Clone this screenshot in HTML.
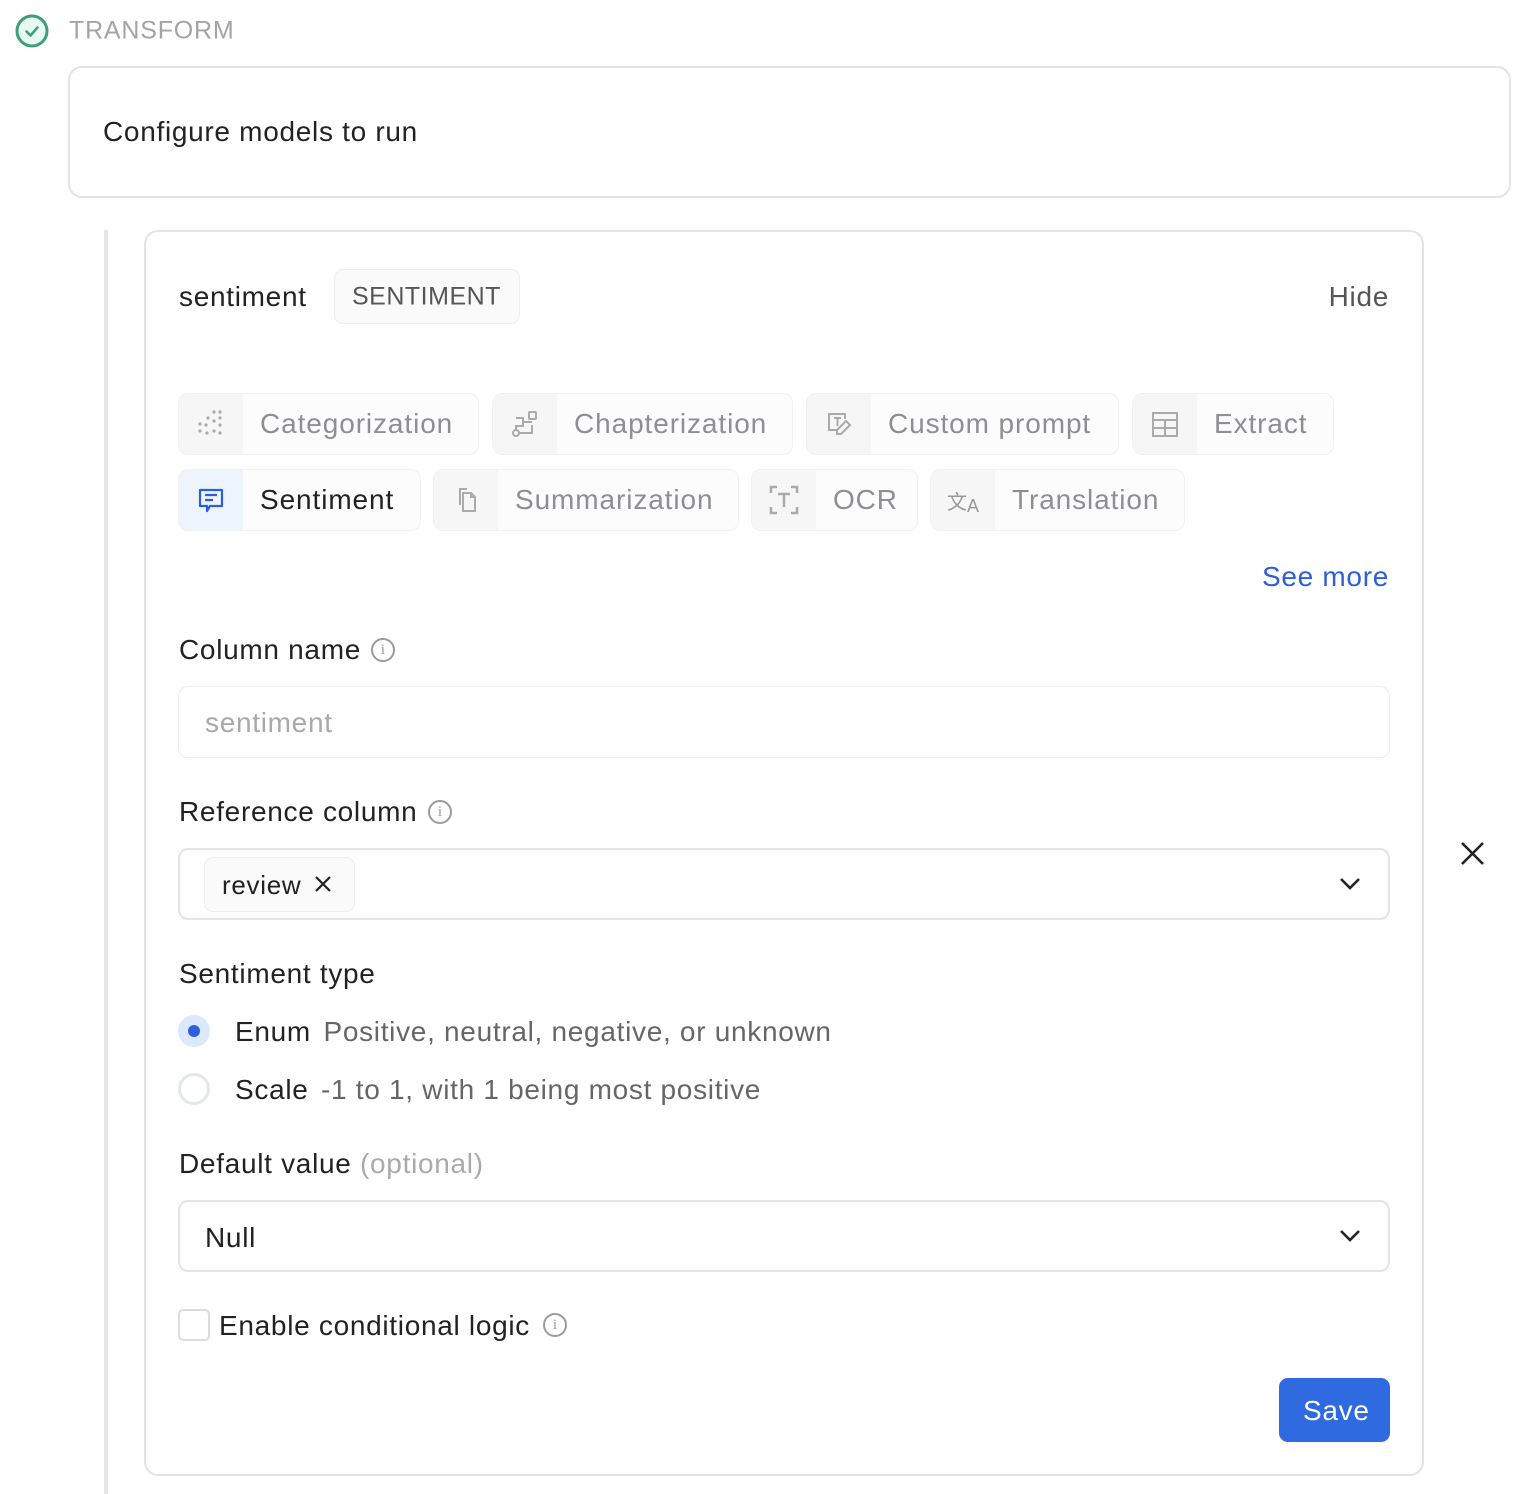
<!DOCTYPE html>
<html><head><meta charset="utf-8"><style>
*{box-sizing:border-box;margin:0;padding:0}
body{width:1538px;height:1494px;background:#fff;font-family:"Liberation Sans",Helvetica,Arial,sans-serif;color:#222;position:relative;overflow:hidden}
.a{position:absolute}
.t{position:absolute;white-space:nowrap;line-height:1;transform:translateY(-50%);letter-spacing:.7px}
.chip{position:absolute;height:62px;border:1.5px solid #f1f1f3;border-radius:10px;background:#fcfcfc;overflow:hidden}
.chip .ic{position:absolute;left:0;top:0;width:64px;height:100%;background:#f6f6f7;display:flex;align-items:center;justify-content:center}
.chip .lb{position:absolute;left:81px;top:50%;transform:translateY(-50%);font-size:28px;color:#8e8e93;white-space:nowrap;letter-spacing:.9px}
.box{position:absolute;border:2px solid #e4e4e7;border-radius:10px;background:#fff}
.info{display:inline-block;width:24px;height:24px;border:2px solid #9a9aa0;border-radius:50%;position:absolute}
.info:after{content:"i";position:absolute;left:0;right:0;top:2px;text-align:center;font-size:15px;color:#9a9aa0;font-family:"Liberation Serif",serif}
</style></head><body>
<svg class="a" style="left:15px;top:14px" width="34" height="34" viewBox="0 0 34 34"><circle cx="17" cy="17" r="15" fill="#e9f8f1" stroke="#3f9d7c" stroke-width="3"/><path d="M11.5 17.5l4 4 7-8" fill="none" stroke="#3f9d7c" stroke-width="2.5" stroke-linecap="round" stroke-linejoin="round"/></svg>
<div class="t" style="left:69px;top:31px;font-size:25px;color:#a3a3a8;letter-spacing:.8px">TRANSFORM</div>
<div class="box" style="left:68px;top:66px;width:1443px;height:132px;border-radius:14px"></div>
<div class="t" style="left:103px;top:132px;font-size:28px">Configure models to run</div>
<div class="a" style="left:104px;top:230px;width:4px;height:1264px;background:#e6e6e9"></div>
<div class="box" style="left:144px;top:230px;width:1280px;height:1246px;border-radius:14px"></div>
<div class="t" style="left:179px;top:297px;font-size:28px">sentiment</div>
<div class="a" style="left:334px;top:269px;width:186px;height:55px;border:1.5px solid #ededf0;border-radius:9px;background:#fafafa"></div>
<div class="t" style="left:352px;top:297px;font-size:25px;color:#555;letter-spacing:.5px">SENTIMENT</div>
<div class="t" style="right:149px;top:297px;font-size:28px;color:#555">Hide</div>

<div class="chip" style="left:178px;top:393px;width:301px"><div class="ic"><svg width="30" height="30" viewBox="0 0 30 30" fill="#aaa"><circle cx="18" cy="3" r="1.6"/><circle cx="24" cy="3" r="1.6"/><circle cx="12" cy="9" r="1.6"/><circle cx="24" cy="9" r="1.6"/><circle cx="18" cy="12" r="1.6"/><circle cx="4" cy="15" r="1.6"/><circle cx="10" cy="16" r="1.6"/><circle cx="24" cy="16" r="1.6"/><circle cx="4" cy="22" r="1.6"/><circle cx="18" cy="22" r="1.6"/><circle cx="11" cy="24" r="1.6"/><circle cx="24" cy="24" r="1.6"/></svg></div><div class="lb">Categorization</div></div>
<div class="chip" style="left:492px;top:393px;width:301px"><div class="ic"><svg width="30" height="30" viewBox="0 0 30 30" fill="none" stroke="#aaa" stroke-width="2"><rect x="19" y="3" width="7" height="7" rx="1"/><path d="M6 9h7v8H6v4M13 13h9"/><circle cx="6" cy="24" r="3"/><path d="M9 24h13v-8"/></svg></div><div class="lb">Chapterization</div></div>
<div class="chip" style="left:806px;top:393px;width:313px"><div class="ic"><svg width="30" height="30" viewBox="0 0 30 30" fill="none" stroke="#aaa" stroke-width="2"><path d="M13 21H5V5h16v5"/><path d="M10 9h7M13.5 9v8"/><path d="M22 12l4 4-9 9h-4v-4z"/></svg></div><div class="lb">Custom prompt</div></div>
<div class="chip" style="left:1132px;top:393px;width:202px"><div class="ic"><svg width="30" height="30" viewBox="0 0 30 30" fill="none" stroke="#aaa" stroke-width="2"><rect x="3" y="4" width="24" height="23"/><path d="M3 11h24M3 19h24M15 11v16"/></svg></div><div class="lb">Extract</div></div>

<div class="chip" style="left:178px;top:469px;width:243px"><div class="ic" style="background:#eef4fd"><svg width="30" height="30" viewBox="0 0 30 30" fill="none" stroke="#2d5fd8" stroke-width="2.2" stroke-linejoin="round"><path d="M4 5h22v16H14l-3 5v-5H4z"/><path d="M9 10h12M9 15h8"/></svg></div><div class="lb" style="color:#222">Sentiment</div></div>
<div class="chip" style="left:433px;top:469px;width:306px"><div class="ic"><svg width="30" height="30" viewBox="0 0 30 30" fill="none" stroke="#aaa" stroke-width="2"><path d="M9 20V4h7M12 8h8l4 4v14H12z"/><path d="M20 8v4h4"/></svg></div><div class="lb">Summarization</div></div>
<div class="chip" style="left:751px;top:469px;width:167px"><div class="ic"><svg width="34" height="34" viewBox="0 0 34 34" fill="none" stroke="#aaa" stroke-width="2.5"><path d="M4 10V4h6M24 4h6v6M30 24v6h-6M10 30H4v-6M11 11h12M17 11v13"/></svg></div><div class="lb">OCR</div></div>
<div class="chip" style="left:930px;top:469px;width:255px"><div class="ic"><span style="font-size:20px;color:#999;font-family:'Noto Sans CJK SC',sans-serif">文</span><span style="font-size:18px;color:#999;margin-top:12px">A</span></div><div class="lb">Translation</div></div>

<div class="t" style="right:149px;top:577px;font-size:28px;color:#2b5fd9">See more</div>

<div class="t" style="left:179px;top:650px;font-size:28px">Column name</div>
<span class="info" style="left:371px;top:638px"></span>
<div class="box" style="left:178px;top:686px;width:1212px;height:72px;border-color:#ededf0;border-width:1.5px"></div>
<div class="t" style="left:205px;top:723px;font-size:28px;color:#a8a8ad">sentiment</div>

<div class="t" style="left:179px;top:812px;font-size:28px">Reference column</div>
<span class="info" style="left:428px;top:800px"></span>
<div class="box" style="left:178px;top:848px;width:1212px;height:72px"></div>
<div class="a" style="left:204px;top:857px;width:151px;height:55px;border:1.5px solid #ededf0;border-radius:9px;background:#fafafa"></div>
<div class="t" style="left:222px;top:885px;font-size:26px">review</div>
<svg class="a" style="left:314px;top:875px" width="18" height="18" viewBox="0 0 18 18"><path d="M2 2l14 14M16 2L2 16" stroke="#222" stroke-width="2.2"/></svg>
<svg class="a" style="left:1339px;top:875px" width="22" height="16" viewBox="0 0 22 16"><path d="M2 4l9 9 9-9" fill="none" stroke="#222" stroke-width="2.6"/></svg>
<svg class="a" style="left:1460px;top:841px" width="25" height="25" viewBox="0 0 25 25"><path d="M2 2l21 21M23 2L2 23" stroke="#222" stroke-width="2.6"/></svg>

<div class="t" style="left:179px;top:974px;font-size:28px">Sentiment type</div>
<div class="a" style="left:178px;top:1015px;width:32px;height:32px;border-radius:50%;background:#dde8fb"></div>
<div class="a" style="left:188px;top:1025px;width:12px;height:12px;border-radius:50%;background:#2d5fd8"></div>
<div class="t" style="left:235px;top:1032px;font-size:28px">Enum <span style="color:#666;margin-left:4px">Positive, neutral, negative, or unknown</span></div>
<div class="a" style="left:178px;top:1073px;width:32px;height:32px;border-radius:50%;border:3px solid #e4e7ed"></div>
<div class="t" style="left:235px;top:1090px;font-size:28px">Scale <span style="color:#666;margin-left:4px">-1 to 1, with 1 being most positive</span></div>

<div class="t" style="left:179px;top:1164px;font-size:28px">Default value <span style="color:#aaa">(optional)</span></div>
<div class="box" style="left:178px;top:1200px;width:1212px;height:72px"></div>
<div class="t" style="left:205px;top:1238px;font-size:28px">Null</div>
<svg class="a" style="left:1339px;top:1227px" width="22" height="16" viewBox="0 0 22 16"><path d="M2 4l9 9 9-9" fill="none" stroke="#222" stroke-width="2.6"/></svg>

<div class="a" style="left:178px;top:1309px;width:32px;height:32px;border:2px solid #dcdce0;border-radius:5px"></div>
<div class="t" style="left:219px;top:1326px;font-size:28px">Enable conditional logic</div>
<span class="info" style="left:543px;top:1313px"></span>

<div class="a" style="left:1279px;top:1378px;width:111px;height:64px;background:#2f6ae0;border-radius:9px"></div>
<div class="t" style="left:1303px;top:1411px;font-size:28px;color:#fff">Save</div>
</body></html>
